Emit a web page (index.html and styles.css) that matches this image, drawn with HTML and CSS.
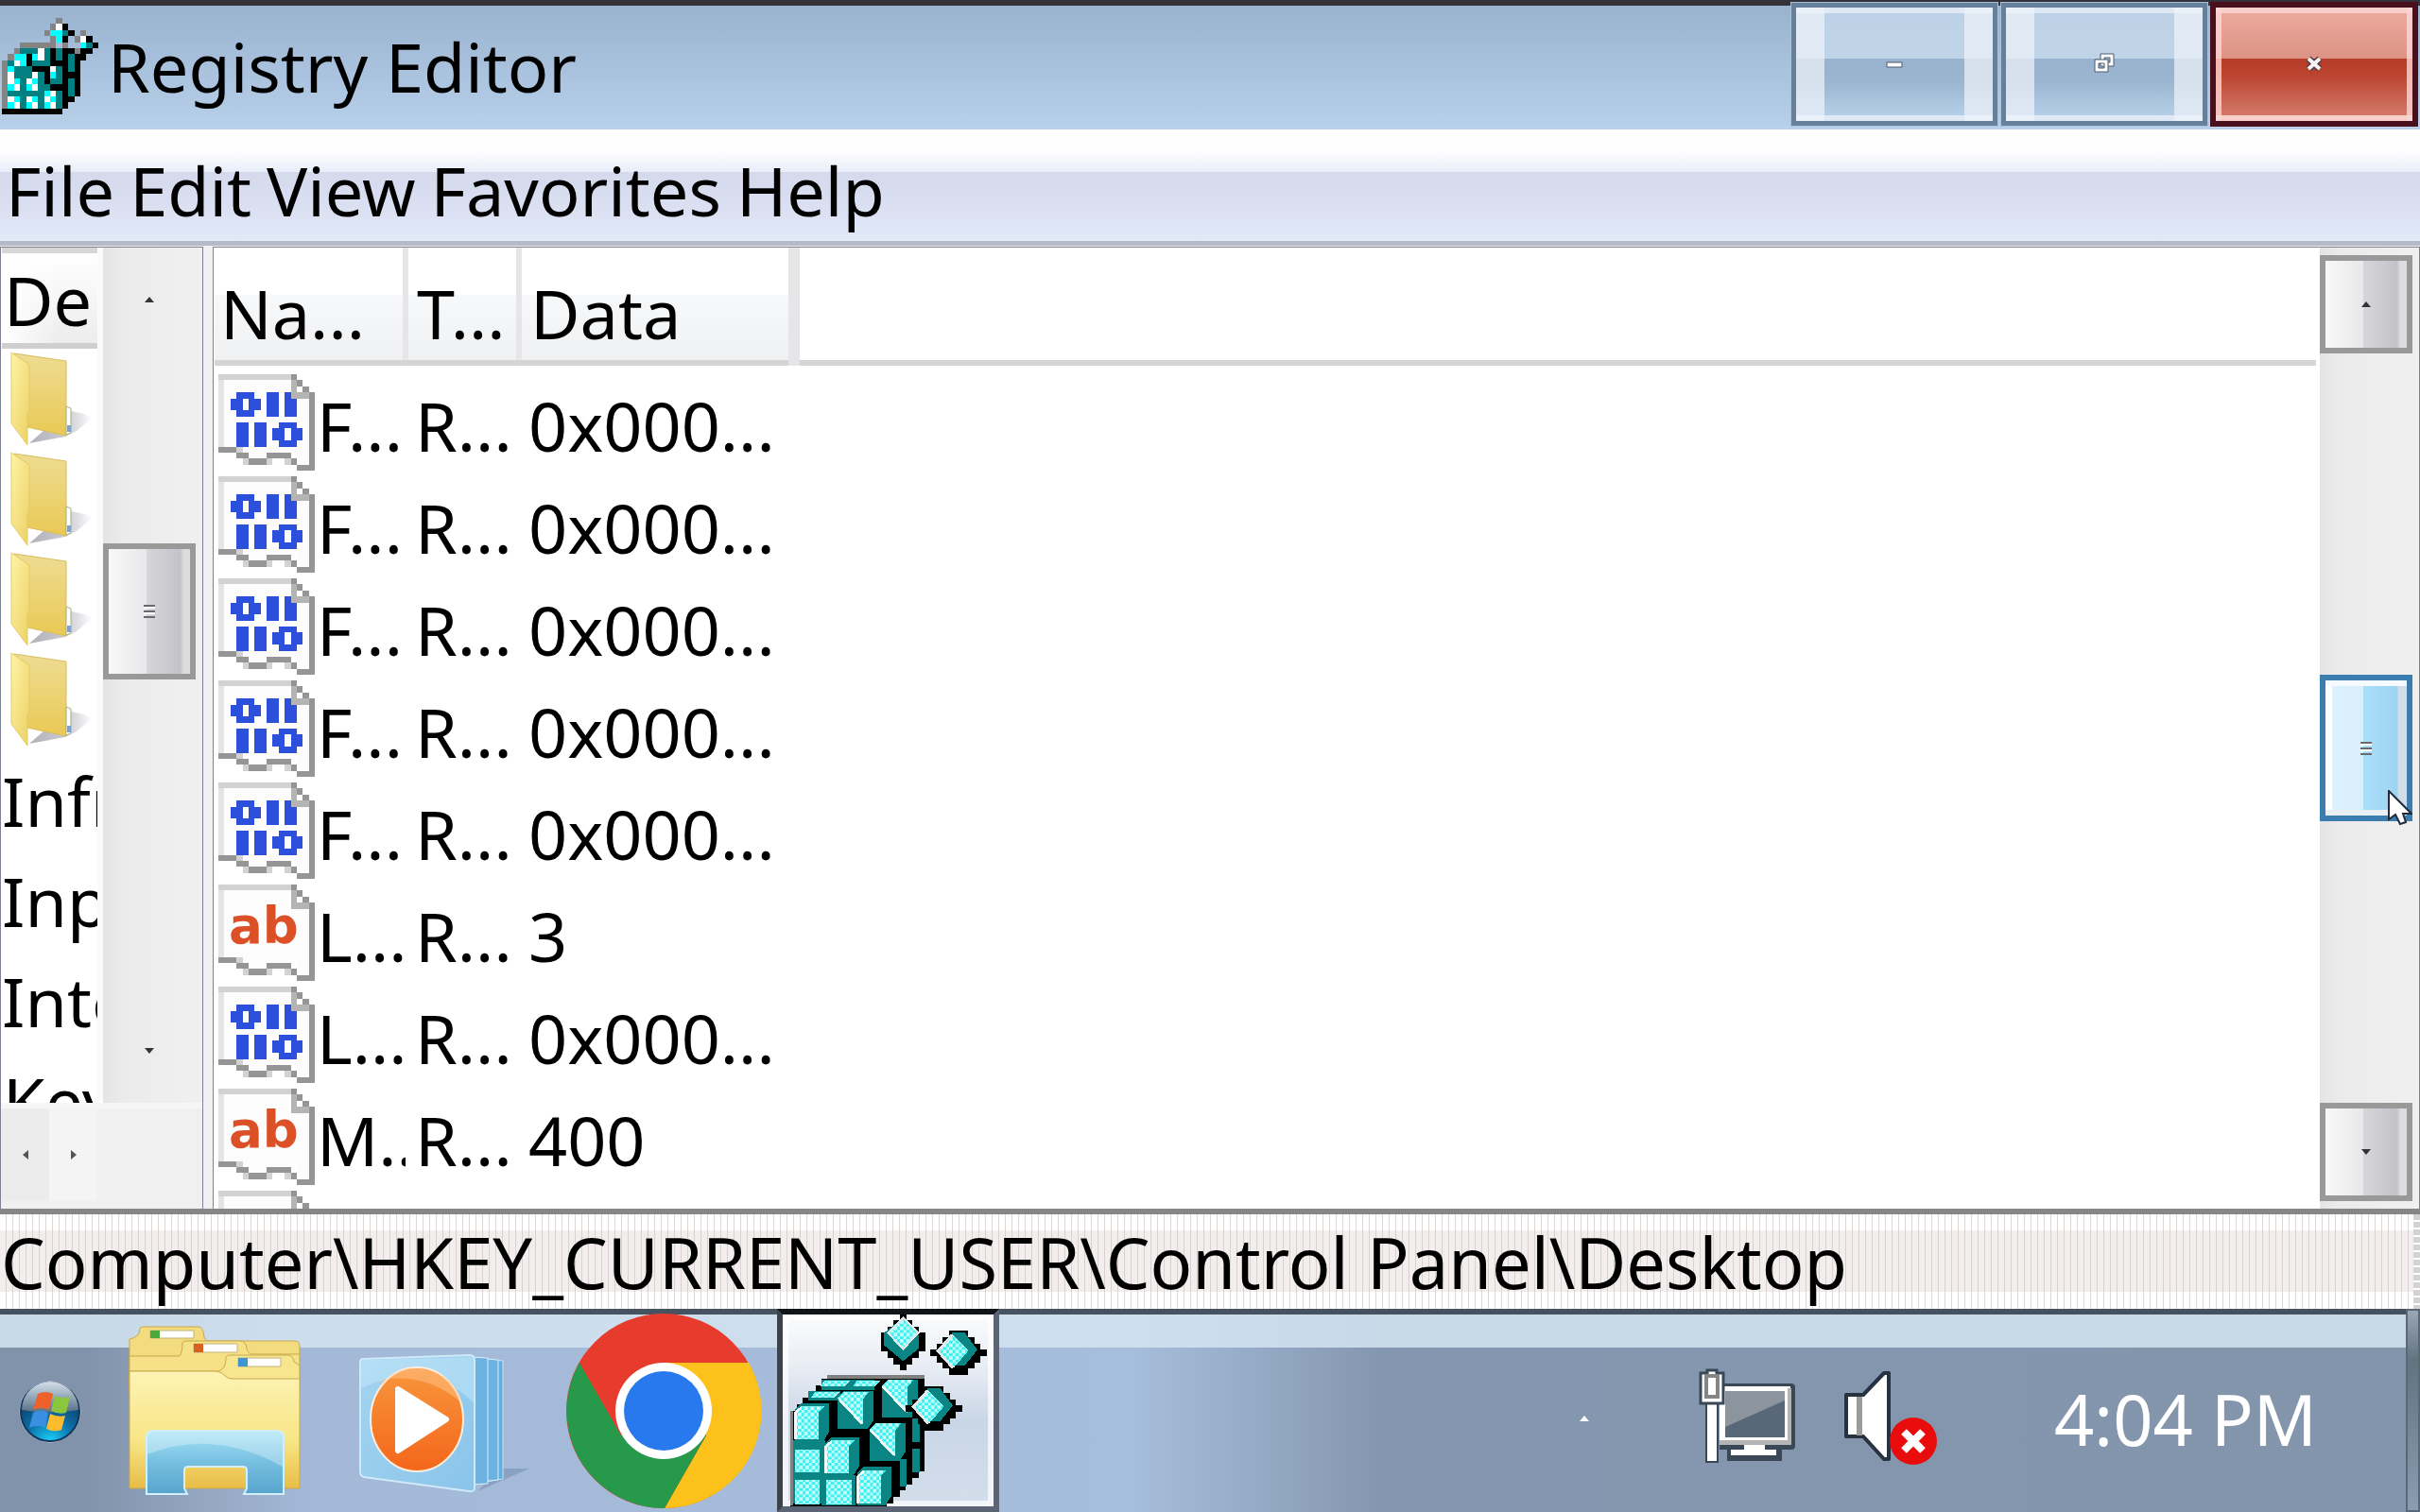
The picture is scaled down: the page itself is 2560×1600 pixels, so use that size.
FILE: index.html
```
<!DOCTYPE html>
<html lang="en">
  <head>
    <meta charset="UTF-8" />
    <meta name="viewport" content="width=device-width, initial-scale=1.0" />
    <title>Registry Editor</title>
    <link rel="stylesheet" href="styles.css">
  </head>

  <body>
    <!-- shared icons -->
    <svg class="sprite" aria-hidden="true">
      <defs>
        <linearGradient id="folderFront" x1="0" y1="0" x2="1" y2="1">
          <stop offset="0" stop-color="#fff3a6" />
          <stop offset="1" stop-color="#ecd165" />
        </linearGradient>
        <linearGradient id="folderBack" x1="0" y1="0" x2="0" y2="1">
          <stop offset="0" stop-color="#eedc92" />
          <stop offset="1" stop-color="#e9c955" />
        </linearGradient>
        <linearGradient id="folderShadow">
          <stop offset="0" stop-color="#8f8f9c" />
          <stop offset=".6" stop-color="#b4b4be" />
          <stop offset="1" stop-color="#ffffff" />
        </linearGradient>
      </defs>
      <symbol id="page" viewBox="0 0 16 16">
        <path fill="#fcfcfc" d="M1 1h11v3h3v11h-2v-2h-5v1h-3v-1h-2v-1h-2z" />
        <g shape-rendering="crispEdges" fill="none">
          <path stroke="#d2d2d2" d="M0 .5h12M3 12.5h1M4 14.5h1M8 14.5h1M11 14.5h1" />
          <path stroke="#e4e4e4" d="M.5 1v11" />
          <path stroke="#b4b4b4" d="M12.5 1v3M13 3.5h2" />
          <path stroke="#959595" d="M12 .5h1M13 1.5h1M14 2.5h1M15.5 3v13M13 15.5h2M12 14.5h1M8 13.5h4M5 14.5h3M3 13.5h2M0 12.5h3" />
        </g>
      </symbol>
      <symbol id="binary" viewBox="0 0 16 16">
        <use href="#page" />
        <g fill="#2c50dc" shape-rendering="crispEdges">
          <path d="M3 3h3v1h1v2h-1v1h-3v-1h-1v-2h1zM4 4v2h1v-2zM8 3h2v4h-2zM11 3h1v1h1v3h-2z" />
          <path d="M3 8h2v4h-2zM6 8h2v4h-2zM10 8h3v1h1v2h-1v1h-3v-1h-1v-2h1zM11 9v2h1v-2z" />
        </g>
      </symbol>
      <symbol id="folder" viewBox="0 0 88 102">
        <path fill="url(#folderShadow)" d="M20 97L60 62L78 66L87 70L70 84L58 90z" opacity=".7" />
        <path fill="url(#folderBack)" stroke="#d9bd5c" d="M4 2L59 10V89L18 80z" />
        <path fill="#fff" stroke="#a8b07a" d="M59 58l5 2v26l-5 2z" />
        <path fill="#7fa3cf" d="M60 78h4v7h-4z" />
        <path fill="url(#folderFront)" stroke="#e3cb67" d="M1 1L20 14V63L18 66V99L1 76z" />
      </symbol>
    </svg>

    <header class="titlebar">
      <svg class="app-icon" viewBox="0 0 16 16" shape-rendering="crispEdges" fill="none">
        <path fill="#000" d="M0 15h10v1h-10zM4 5h9v8h-1v1h-1v1h-2v-7h-5zM9 1h2v1h1v1h-1v1h-2zM13 3h2v1h1v1h-1v1h-1v1h-1z" />
        <path fill="#008080" d="M1 7h1v-1h1v-1h5v3h1v4h1v3h-9z" />
        <path stroke="#848484" d="M.5 7v8M1 6.5h1M2 5.5h1M3 4.5h6M9 .5h1M8 1.5h1M7 2.5h1M8 3.5h1M13 2.5h1M12 3.5h1M10 4.5h1M12 5.5h1M10 5.5h1" />
        <path stroke="#000" d="M4.500 6v2M5 8.500h3M7.500 9v2M8.500 5v3M8 11.500h2M10.500 5v2M12.500 6v7M10.500 8v7" />
        <path stroke="#008080" d="M11.500 6v3M11.500 10v3M9.500 5v2M9.500 8v3M14.500 4v1M10.500 2v1" />
        <path stroke="#00ffff" d="M9 2.500h1M8 2.500h1M9 3.500h1M13 4.500h1M2 6.500h1M1 8.500h1M3 7.500h1M2 10.500h1M1 11.500h1M5 10.500h1M4 11.500h1M5 13.500h1M2 13.500h1M1 14.500h1M4 14.500h1M8 9.500h1M7 12.500h1M8 13.500h1M7 14.500h1M5 6.500h1M3 6.500h1" />
        <path stroke="#fff" d="M9 1.500h1M13 3.500h1M6 5.500h1M6 6.500h1M2 7.500h1M1 9.500h1M1 10.500h1M2 11.500h1M5 9.500h1M4 10.500h1M5 11.500h1M4 13.500h1M1 13.500h1M2 14.500h1M5 14.500h1M8 8.500h1M8 12.500h1M7 13.500h1M8 14.500h1" />
      </svg>
      <h1>Registry Editor</h1>
      <div class="window-buttons">
        <button class="win-button" aria-label="Minimize">
          <svg viewBox="0 0 26 26"><path fill="#fff" stroke="#4a5c70" d="M5 11h16v5h-16z" /></svg>
        </button>
        <button class="win-button" aria-label="Restore">
          <svg viewBox="0 0 26 26"><path fill="#fff" fill-rule="evenodd" stroke="#4a5c70" d="M9 2h14v13h-14zM13 6v5h6v-5z" /><path fill="#fff" fill-rule="evenodd" stroke="#4a5c70" d="M3 8h14v13h-14zM7 12v5h6v-5z" /></svg>
        </button>
        <button class="win-button close" aria-label="Close">
          <svg viewBox="0 0 26 26"><path stroke="#54383c" stroke-width="7" d="M7 7l12 11M19 7l-12 11" /><path stroke="#f4f4f4" stroke-width="4" d="M7 7l12 11M19 7l-12 11" /></svg>
        </button>
      </div>
    </header>

    <nav class="menubar">
      <button>File</button>
      <button>Edit</button>
      <button>View</button>
      <button>Favorites</button>
      <button>Help</button>
    </nav>

    <main>
      <section class="tree">
        <div class="tree-body">
          <h2>De</h2>
          <ul>
            <li><svg><use href="#folder" /></svg></li>
            <li><svg><use href="#folder" /></svg></li>
            <li><svg><use href="#folder" /></svg></li>
            <li><svg><use href="#folder" /></svg></li>
            <li>Infr</li>
            <li>Inp</li>
            <li>Inte</li>
            <li class="indent">Key</li>
          </ul>
        </div>
        <div class="scrollbar">
          <button class="flat" aria-label="Scroll up"><i class="arrow up"></i></button>
          <div class="space-3"></div>
          <div class="thumb"><i class="grip"></i></div>
          <div class="space-5"></div>
          <button class="flat" aria-label="Scroll down"><i class="arrow down"></i></button>
        </div>
        <div class="hscroll">
          <button class="flat" aria-label="Scroll left"><i class="arrow left"></i></button>
          <button class="flat" aria-label="Scroll right"><i class="arrow right"></i></button>
        </div>
      </section>

      <section class="list">
        <div class="list-body">
          <table>
            <thead>
              <tr>
                <th class="col-name">Na...</th>
                <th class="col-type">T...</th>
                <th class="col-data">Data</th>
                <th></th>
              </tr>
            </thead>
            <tbody>
              <tr><td><svg><use href="#binary" /></svg>F...</td><td>R...</td><td>0x000...</td><td></td></tr>
              <tr><td><svg><use href="#binary" /></svg>F...</td><td>R...</td><td>0x000...</td><td></td></tr>
              <tr><td><svg><use href="#binary" /></svg>F...</td><td>R...</td><td>0x000...</td><td></td></tr>
              <tr><td><svg><use href="#binary" /></svg>F...</td><td>R...</td><td>0x000...</td><td></td></tr>
              <tr><td><svg><use href="#binary" /></svg>F...</td><td>R...</td><td>0x000...</td><td></td></tr>
              <tr><td><svg viewBox="0 0 102 102"><use href="#page" /><text class="ab" x="11" y="62">ab</text></svg>L...</td><td>R...</td><td>3</td><td></td></tr>
              <tr><td><svg><use href="#binary" /></svg>L...</td><td>R...</td><td>0x000...</td><td></td></tr>
              <tr><td><svg viewBox="0 0 102 102"><use href="#page" /><text class="ab" x="11" y="62">ab</text></svg>M..</td><td>R...</td><td>400</td><td></td></tr>
              <tr><td><svg><use href="#page" /></svg></td><td></td><td></td><td></td></tr>
            </tbody>
          </table>
        </div>
        <div class="scrollbar">
          <button class="raised" aria-label="Scroll up"><i class="arrow up"></i></button>
          <div class="space-8"></div>
          <div class="thumb hot">
            <i class="grip"></i>
            <svg class="cursor" viewBox="0 0 26 38"><path fill="#fff" stroke="#222a3c" stroke-width="2" d="M1 1V31L8 26L13 36L19 34L16 25H25z" /></svg>
          </div>
          <div class="space-7"></div>
          <button class="raised" aria-label="Scroll down"><i class="arrow down"></i></button>
        </div>
      </section>
    </main>

    <div class="statusbar">
      <p>Computer\HKEY_CURRENT_USER\Control Panel\Desktop</p>
      <span class="size-grip"></span>
    </div>

    <footer class="taskbar">
      <button class="task start" aria-label="Start">
        <svg viewBox="0 0 66 66">
          <defs>
            <radialGradient id="orb" cx=".5" cy="1" r=".9">
              <stop offset="0" stop-color="#19d3fb" />
              <stop offset=".45" stop-color="#0d6fa8" />
              <stop offset="1" stop-color="#0b2f55" />
            </radialGradient>
            <linearGradient id="orbShine" x1="0" y1="0" x2="0" y2="1">
              <stop offset="0" stop-color="#d4e0ea" />
              <stop offset="1" stop-color="#567086" />
            </linearGradient>
          </defs>
          <circle cx="33" cy="33" r="32" fill="url(#orb)" stroke="#c3d3e2" />
          <circle cx="33" cy="33" r="31" fill="none" stroke="#16355a" stroke-width="2" />
          <path fill="url(#orbShine)" d="M3 31A30 30 0 0 1 63 31Q33 36 3 31z" />
          <path fill="#f0602a" d="M20 14Q28 10 36 14L32 31Q24 27 15 31z" />
          <path fill="#8cc63e" d="M38 16Q45 20 54 17L50 34Q42 36 34 32z" />
          <path fill="#3a8fe0" d="M15 34Q23 29 31 34L28 50Q20 46 11 50z" />
          <path fill="#fdbb2e" d="M33 35Q41 39 49 37L45 52Q37 55 29 51z" />
        </svg>
      </button>
      <button class="task explorer" aria-label="Windows Explorer">
        <svg viewBox="0 0 184 180">
          <defs>
            <linearGradient id="paper" x1="0" y1="0" x2="0" y2="1">
              <stop offset="0" stop-color="#fdf3b4" />
              <stop offset=".6" stop-color="#f8e585" />
              <stop offset="1" stop-color="#e8bd45" />
            </linearGradient>
            <linearGradient id="stand" x1="0" y1="0" x2="0" y2="1">
              <stop offset="0" stop-color="#a6e3f8" />
              <stop offset=".5" stop-color="#76bfe0" />
              <stop offset="1" stop-color="#58a4cd" />
            </linearGradient>
          </defs>
          <path fill="#f2dc7f" stroke="#c9a94a" d="M1 14Q12 12 12 3Q12 1 16 1H74Q79 1 80 12L82 16H176Q181 16 181 22V60H1z" />
          <path fill="#f6e189" stroke="#c9a94a" d="M1 32H54Q57 28 57 18Q57 16 62 16H118Q124 16 125 24Q126 30 132 30H181V70H1z" />
          <path fill="#f8e68f" stroke="#c9a94a" d="M1 48H95Q103 46 103 34Q103 31 108 31H168Q174 31 175 38L181 42V70H1z" />
          <path fill="url(#paper)" stroke="#c9a94a" d="M1 48H90Q98 48 102 53Q105 56 110 56H181V172H1z" />
          <path fill="#fff" stroke="#c4b27a" d="M23 5h46v8h-46zM69 19h46v9h-46zM116 34h45v9h-45z" />
          <path fill="#4ba83a" d="M23 5h10v8h-10z" />
          <path fill="#d9601f" d="M69 19h10v9h-10z" />
          <path fill="#3e95cf" d="M116 34h10v9h-10z" />
          <path fill="url(#stand)" stroke="#d2effa" stroke-width="2" d="M19 178V118Q19 111 26 111H157Q164 111 164 118V178H122L125 172V153Q125 149 121 149H63Q59 149 59 153V172L62 178z" />
          <path fill="#fff" opacity=".3" d="M20 136Q90 108 163 149V118Q163 112 157 112H26Q20 112 20 118z" />
        </svg>
      </button>
      <button class="task player" aria-label="Windows Media Player">
        <svg viewBox="0 0 184 150">
          <defs>
            <linearGradient id="glass" x1="0" y1="0" x2="1" y2="1">
              <stop offset="0" stop-color="#a4d5f0" />
              <stop offset="1" stop-color="#8ac4ea" />
            </linearGradient>
            <linearGradient id="orange" x1="0" y1="0" x2="0" y2="1">
              <stop offset="0" stop-color="#f8963c" />
              <stop offset="1" stop-color="#f4661c" />
            </linearGradient>
          </defs>
          <path fill="#7089ac" opacity=".5" d="M125 146L180 122L150 122z" />
          <path fill="#63aede" stroke="#c5e4f6" d="M120 5L152 8V133L120 138z" />
          <path fill="#6cb3e2" stroke="#d9eefa" d="M110 4L147 7V134L110 138z" />
          <path fill="#6cb3e2" stroke="#d9eefa" d="M100 3L136 5V138L100 140z" />
          <path fill="url(#glass)" stroke="#cfe9f8" stroke-width="2" d="M4 6Q1 6 1 10V125Q1 130 5 131L116 146Q122 147 122 142V7Q122 2 117 2z" />
          <path fill="#c4e7fa" opacity=".5" d="M2 37Q70 5 121 52V4L6 7Q2 7 2 12z" />
          <ellipse cx="61" cy="70" rx="49" ry="55" fill="url(#orange)" stroke="#fdeedd" stroke-width="2" />
          <path fill="#ffc48c" opacity=".5" d="M24 34Q40 14 61 16Q98 18 108 52Q70 20 24 28z" />
          <path fill="#fff" stroke="#fff" stroke-width="6" stroke-linejoin="round" d="M41 38L92 70L41 103z" />
        </svg>
      </button>
      <button class="task chrome" aria-label="Google Chrome">
        <svg viewBox="0 0 207 207">
          <circle cx="103" cy="103" r="103" fill="#e73b2d" />
          <path fill="#fcc21b" d="M103 52H193A103 103 0 0 1 104 206L148 129z" />
          <path fill="#27994a" d="M14 52A103 103 0 0 0 104 206L148 129L103 103L58 129z" />
          <circle cx="103" cy="103" r="51" fill="#fff" />
          <circle cx="103" cy="103" r="42" fill="#2979ee" />
        </svg>
      </button>
      <button class="task active" aria-label="Registry Editor">
        <svg viewBox="0 20 648 609" shape-rendering="crispEdges">
          <defs>
            <pattern id="dots" width="20" height="20" patternUnits="userSpaceOnUse">
              <rect width="20" height="20" fill="#3df0f0" />
              <path fill="#c4fbfb" d="M0 0h10v10h-10zM10 10h10v10h-10z" />
            </pattern>
            <g id="gem">
              <path fill="#000" d="M60 0h20v20h20v20h20v20h20v60h-20v20h-20v20h-20v20h-20v-20h-20v-20h-20v-20h-20v-60h20v-20h20v-20h20z" />
              <path fill="#0b8583" d="M60 20L120 70V110L70 150L10 100V60z" />
              <path fill="url(#dots)" stroke="#e4e8e8" stroke-width="6" d="M70 12L118 60L70 112L22 60z" />
            </g>
            <g id="gem-side">
              <path fill="#000" d="M60 0h60v20h20v20h20v20h20v20h-20v20h-20v20h-20v20h-60v-20h-20v-20h-20v-20h-20v-20h20v-20h20v-20h20z" />
              <path fill="#0b8583" d="M70 6H110L150 60L110 110H80z" />
              <path fill="url(#dots)" d="M70 10L122 62L74 118L22 66z" />
              <path fill="none" stroke="#e4e8e8" stroke-width="8" d="M70 12L24 64L72 118" />
            </g>
            <g id="cube">
              <path fill="#0b8583" d="M10 10L30 -10H120V80L100 112H10z" />
              <path fill="url(#dots)" d="M10 20L30 0H105L85 20V105H10z" />
              <path fill="none" stroke="#f2fafa" stroke-width="8" d="M13 105V20L32 2" />
            </g>
            <g id="wedge">
              <path fill="#0b8583" d="M0 20L20 0H115V90L95 120H0z" />
              <path fill="url(#dots)" d="M0 22L20 2H100L80 25V105z" />
              <path fill="none" stroke="#f2fafa" stroke-width="8" d="M4 24L78 103" />
            </g>
          </defs>
          <path fill="#000" d="M12 325h20v-20h20v-20h20v-20h20v-20h20v-20h20v-14h305v308h-18v20h-20v20h-20v20h-20v20h-20v20h-20v20H12z" />
          <path fill="#808080" d="M130 211h307v12h-307zM12 325h10v300h-10z" />
          <path fill="#0b8583" d="M400 350h22v75h-22zM400 445h22v75h-22zM360 480h22v85h-22zM110 228h170v32h-170zM70 262h100v30h-100zM22 420h100v200h-100zM110 530h110v95h-110z" />
          <path fill="url(#dots)" d="M122 230h80l-16 18h-80zM222 230h76l-16 18h-70zM92 266h76l-16 18h-76z" />
          <use href="#cube" x="16" y="312" />
          <use href="#cube" x="112" y="420" />
          <use href="#cube" x="214" y="514" />
          <path fill="url(#dots)" d="M26 450h78v72h-78zM26 546h78v76h-78zM126 546h80v76h-80z" />
          <use href="#wedge" x="162" y="264" />
          <use href="#wedge" x="303" y="226" />
          <use href="#wedge" x="264" y="364" />
          <use href="#gem" x="300" y="18" />
          <use href="#gem-side" x="456" y="72" />
          <use href="#gem-side" x="378" y="249" />
        </svg>
      </button>

      <div class="tray">
        <button class="task overflow" aria-label="Show hidden icons"><i class="arrow up light"></i></button>
        <svg class="network" viewBox="0 0 102 100">
          <path fill="#3a4756" d="M24 16H98Q102 16 102 20V82Q102 86 98 86H88V98H30V86H22z" />
          <path fill="#fff" d="M22 19H97V77H22zM48 78H70V86H82V92H34V86H48z" />
          <path fill="#b4b4b4" d="M22 76H94V21H98V81H22z" />
          <path fill="#596878" d="M28 24H91V73H28z" />
          <path fill="#a3a8ae" opacity=".7" d="M28 24H91V34L28 62z" />
          <path fill="#fff" stroke="#3a4756" stroke-width="2" d="M8 36H20V99H8z" />
          <path fill="#fff" stroke="#3a4756" stroke-width="3" d="M2 5H9V2H19V5H26V37H2z" />
          <path fill="#fff" stroke="#858585" stroke-width="4" d="M8 8H20V30H8z" />
        </svg>
        <svg class="volume" viewBox="0 0 100 102">
          <path fill="#fff" stroke="#26323f" stroke-width="4" stroke-linejoin="round" d="M2 26H20L42 3H47V94H42L20 70H2z" />
          <path fill="#9b9b9b" d="M13 28h6v41h-6z" />
          <circle cx="73" cy="75" r="25" fill="#e80c0c" />
          <path stroke="#fff" stroke-width="8" d="M63 65L83 85M83 65L63 85" />
        </svg>
        <time>4:04 PM</time>
        <button class="show-desktop" aria-label="Show desktop"></button>
      </div>
    </footer>
  </body>
</html>
```

FILE: styles.css
```
* {
  box-sizing: border-box;
  margin: 0;
  padding: 0;
  --line: #7d8190;
  --face: #f0f0f0;
  --grey: #999999;
}

body {
  display: flex;
  flex-direction: column;
  height: 100vh;
  overflow: hidden;
  background-color: #ffffff;
  color: #000000;
  font-family: "Noto Sans", "Open Sans", sans-serif;
  font-size: 72px;
  line-height: 98px;
  white-space: nowrap;
}

button {
  display: flex;
  align-items: center;
  justify-content: center;
  border: none;
  background: none;
  font: inherit;
  color: inherit;
}

svg {
  display: block;
  flex: none;
}

h1,
h2,
th {
  font-size: inherit;
  font-weight: normal;
}

.sprite {
  position: absolute;
  width: 0;
  height: 0;
}

/* title bar */
.titlebar {
  display: flex;
  align-items: center;
  height: 137px;
  padding-bottom: 4px;
  border-top: 6px solid #35323a;
  background: linear-gradient(#99b2ce, #b8d0ea);
}

.app-icon {
  width: 102px;
  height: 102px;
  margin-left: 2px;
}

.titlebar h1 {
  flex: 1;
  padding-left: 10px;
}

.window-buttons {
  display: flex;
  align-self: flex-start;
  gap: 2px;
  margin-top: -4px;
  padding-right: 2px;
}

.win-button {
  width: 220px;
  height: 132px;
  border: 6px solid #667f9b;
  outline: 1px solid #aac0d8;
  outline-offset: -1px;
  background:
    linear-gradient(90deg, rgba(240, 244, 250, 0.7) 30px, transparent 30px, transparent calc(100% - 30px), rgba(240, 244, 250, 0.7) calc(100% - 30px)),
    linear-gradient(#dfe9f5 6px, #bdd2e6 6px, #bfd4e7 45%, #99b2ce 45%, #9bb5d0 65%, #b5cfe8 calc(100% - 6px), #dfe9f5 calc(100% - 6px));
}

.win-button svg {
  width: 26px;
  height: 26px;
}

.close {
  border-color: #4a0f1c;
  outline: none;
  background:
    linear-gradient(90deg, rgba(255, 215, 210, 0.8) 6px, transparent 6px, transparent calc(100% - 6px), rgba(255, 215, 210, 0.8) calc(100% - 6px)),
    linear-gradient(#f8cfca 6px, #eba99c 6px, #dc9385 45%, #b63c27 45%, #bb4530 60%, #d3796a calc(100% - 6px), #f8cfca calc(100% - 6px));
}

/* menu */
.menubar {
  display: flex;
  gap: 16px;
  height: 123px;
  padding: 15px 6px 0;
  border-bottom: 5px solid #b6bac8;
  background: linear-gradient(#ffffff, #fdfdff 20%, #e8edf8 38%, #d4daec 38%, #d8ddef 60%, #e2e9f8);
}

.menubar button {
  height: 98px;
}

/* panes */
main {
  display: flex;
  flex: 1;
  gap: 10px;
  min-height: 0;
  padding-top: 1px;
  background-color: var(--face);
}

.tree,
.list {
  border: 1px solid var(--line);
  border-bottom: none;
}

.tree {
  display: grid;
  grid-template-columns: 108px 1fr;
  grid-template-rows: 1fr 112px;
  width: 215px;
  min-height: 0;
  background-color: var(--face);
}

.tree-body {
  min-height: 0;
  padding-left: 1px;
  border-right: 6px solid #fbfbfb;
  background-color: #ffffff;
  overflow: hidden;
}

.tree h2 {
  height: 107px;
  padding-left: 2px;
  border-top: 6px solid #d6d6d6;
  border-bottom: 6px solid #cfcfcf;
  background: linear-gradient(90deg, #ffffff, rgba(255, 255, 255, 0) 60%), linear-gradient(#ffffff, #ececec);
  overflow: hidden;
}

.tree ul {
  padding-top: 1px;
  list-style: none;
}

.tree li {
  display: flex;
  align-items: center;
  height: 106px;
}

.tree li svg {
  width: 88px;
  height: 102px;
  margin-left: 9px;
}

.tree li.indent {
  padding-left: 1px;
}

/* scrollbars */
.scrollbar {
  display: flex;
  flex-direction: column;
  min-height: 0;
  background: linear-gradient(90deg, #e4e4e4, #ebebeb 20%, #f0f0f0);
}

.tree .scrollbar {
  width: 98px;
}

.flat,
.raised {
  height: 104px;
}

.scrollbar .flat {
  height: 110px;
}

.thumb,
.raised {
  display: flex;
  align-items: center;
  justify-content: center;
  width: 98px;
  border: 6px solid var(--grey);
  background: linear-gradient(90deg, #f8f8f8, #e8e8ea 47%, #d6d6da 47%, #c2c2c8 88%, #dddddf 92%);
}

.thumb {
  position: relative;
  height: 144px;
}

.space-3 {
  flex: 3;
}

.space-5 {
  flex: 5;
}

.space-7 {
  flex: 7;
}

.space-8 {
  flex: 8;
}

.hscroll {
  grid-column: 1 / 3;
  display: flex;
  border-top: 6px solid #f6f6f6;
}

.hscroll .flat {
  width: 51px;
  height: 98px;
  background-color: #ececec;
}

.hscroll .flat + .flat {
  background-color: #f4f4f4;
}

.arrow {
  border: 5px solid transparent;
}

.up {
  border-top: none;
  border-bottom: 6px solid #333333;
}

.down {
  border-bottom: none;
  border-top: 6px solid #333333;
}

.left {
  border-left: none;
  border-right: 6px solid #555555;
}

.right {
  border-right: none;
  border-left: 6px solid #555555;
}

.light {
  border-bottom-color: #ffffff;
}

.grip {
  width: 12px;
  height: 14px;
  background: repeating-linear-gradient(#6a6a6e 0 2px, #ffffff 2px 4px, transparent 4px 6px);
}

/* values */
.list {
  display: flex;
  flex: 1;
  min-width: 0;
  background-color: #ffffff;
}

.list-body {
  flex: 1;
  min-width: 0;
  padding: 0 4px 0 1px;
  overflow: hidden;
}

.list .scrollbar {
  width: 105px;
  padding: 8px 0 8px;
}

.list .thumb {
  height: 155px;
}

.list .hot {
  border-color: #3a7dae;
  background: linear-gradient(90deg, #ffffff 6px, #dcf1fd 8px, #d8effc 47%, #aadffa 47%, #9ed3f2 88%, #d3dde6 90%);
  box-shadow: inset 0 6px #f4fafe, inset 0 -6px #e8f0f6;
}

.cursor {
  position: absolute;
  right: -6px;
  bottom: -11px;
  width: 26px;
  height: 38px;
}

table {
  width: 100%;
  table-layout: fixed;
  border-collapse: collapse;
}

th {
  height: 122px;
  padding: 18px 0 0 9px;
  border-right: 6px solid #e6e6e8;
  border-bottom: 6px solid #d5d5d5;
  background: linear-gradient(#ffffff 42%, #f6f8fa 42%, #f0f1f3);
  text-align: left;
  overflow: hidden;
}

th:first-child {
  padding-left: 6px;
}

th:last-child {
  border-right: none;
  background: #ffffff;
}

.col-name {
  width: 202px;
}

.col-type {
  width: 120px;
}

.col-data {
  width: 291px;
  border-right-width: 12px;
}

td {
  height: 108px;
  padding: 0 0 0 10px;
  overflow: hidden;
}

td:first-child {
  display: flex;
  align-items: center;
  padding: 0 0 0 4px;
}

tbody::before {
  content: "";
  display: block;
  height: 9px;
}

td svg {
  align-self: flex-start;
  width: 102px;
  height: 102px;
  margin-right: 2px;
}

.ab {
  fill: #dc5028;
  font-family: "DejaVu Sans", sans-serif;
  font-size: 53px;
  font-weight: bold;
}

/* status line */
.statusbar {
  display: flex;
  justify-content: space-between;
  height: 106px;
  border-top: 6px solid #868686;
  background:
    repeating-linear-gradient(90deg, transparent 0 6px, rgba(200, 190, 185, 0.6) 6px 7px),
    linear-gradient(#ffffff 17px, #f1eeed 17px 82px, #ffffff 82px);
}

.statusbar p {
  padding: 2px 0 0 1px;
  font-size: 74px;
}

.size-grip {
  width: 7px;
  background: repeating-linear-gradient(#d2d2d2 0 6px, #ffffff 6px 8px);
}

/* taskbar */
.taskbar {
  display: flex;
  align-items: center;
  height: 215px;
  border-top: 6px solid #45525f;
  background:
    linear-gradient(rgba(212, 228, 242, 0.85) 35px, transparent 35px),
    linear-gradient(90deg, #8193aa 90px, #a4b9d8 330px, #a6bddb 1200px, #8497b0 1460px, #8295ab);
}

.task {
  height: 209px;
}

.start {
  width: 66px;
  margin-left: 20px;
  padding-bottom: 4px;
}

.explorer {
  margin-left: 50px;
  padding-bottom: 6px;
}

.player {
  margin-left: 60px;
  padding-top: 22px;
}

.chrome {
  margin-left: 35px;
  padding-bottom: 4px;
}

.active {
  width: 235px;
  height: 215px;
  margin: -6px 0 0 16px;
  border: 6px solid #5b6474;
  border-top-color: #11151a;
  border-left-color: #3b424c;
  background: linear-gradient(#fbfcfd, #e6ebf3 30%, #c9d6e6 55%, #d3deeb);
  box-shadow: inset 0 0 0 6px rgba(255, 255, 255, 0.7);
}

.start svg {
  width: 66px;
  height: 66px;
}

.explorer svg {
  width: 184px;
  height: 180px;
}

.player svg {
  width: 184px;
  height: 150px;
}

.chrome svg {
  width: 207px;
  height: 207px;
}

.active svg {
  width: 216px;
  height: 203px;
}

.tray {
  display: flex;
  align-items: center;
  height: 100%;
  margin-left: auto;
  color: #ffffff;
}

.overflow {
  width: 40px;
  margin-right: 101px;
  padding-top: 10px;
}

.network {
  width: 102px;
  height: 100px;
  margin-top: 4px;
}

.volume {
  width: 100px;
  height: 102px;
  margin: 10px 122px 0 52px;
}

.tray time {
  padding-top: 12px;
  font-size: 74px;
}

.show-desktop {
  width: 15px;
  height: 215px;
  margin: -6px 0 0 94px;
  border: 2px solid #5a6878;
  background: linear-gradient(#9aa6b4, #62727f 25%, #8b9db3);
}
```
